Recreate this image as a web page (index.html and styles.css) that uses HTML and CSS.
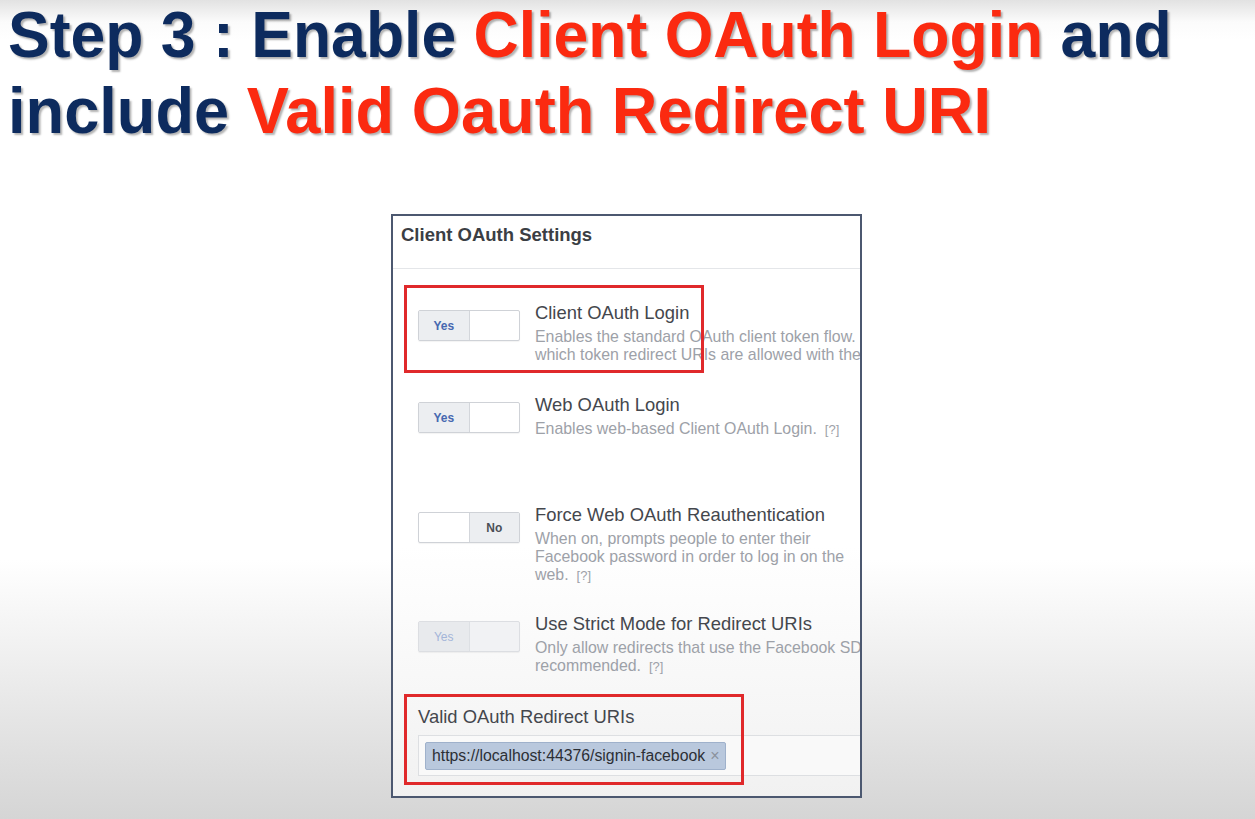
FILE: index.html
```html
<!DOCTYPE html>
<html lang="en">
<head>
<meta charset="utf-8">
<title>Step 3 : Enable Client OAuth Login</title>
<link rel="stylesheet" href="styles.css">
</head>
<body>
<h1 class="title">
  <span class="line"><span class="navy">Step 3 : Enable </span><span class="red">Client OAuth Login</span><span class="navy"> and</span></span>
  <span class="line line-2"><span class="navy">include </span><span class="red">Valid Oauth Redirect URI</span></span>
</h1>

<div class="panel">
  <div class="panel-head">Client OAuth Settings</div>
  <div class="panel-body">
    <div class="row">
      <div class="toggle"><span class="seg on yes">Yes</span><span class="seg"></span></div>
      <div class="text">
        <div class="label">Client OAuth Login</div>
        <div class="desc">Enables the standard OAuth client token flow.<br>which token redirect URIs are allowed with the</div>
      </div>
    </div>
    <div class="row row-tall">
      <div class="toggle"><span class="seg on yes">Yes</span><span class="seg"></span></div>
      <div class="text">
        <div class="label">Web OAuth Login</div>
        <div class="desc">Enables web-based Client OAuth Login.<span class="q">[?]</span></div>
      </div>
    </div>
    <div class="row row-dense">
      <div class="toggle"><span class="seg"></span><span class="seg on no">No</span></div>
      <div class="text">
        <div class="label">Force Web OAuth Reauthentication</div>
        <div class="desc">When on, prompts people to enter their<br>Facebook password in order to log in on the<br>web.<span class="q">[?]</span></div>
      </div>
    </div>
    <div class="row">
      <div class="toggle disabled"><span class="seg on yes">Yes</span><span class="seg"></span></div>
      <div class="text">
        <div class="label">Use Strict Mode for Redirect URIs</div>
        <div class="desc">Only allow redirects that use the Facebook SD<br>recommended.<span class="q">[?]</span></div>
      </div>
    </div>
    <div class="field">
      <div class="label">Valid OAuth Redirect URIs</div>
      <div class="input">
        <span class="chip">https://localhost:44376/signin-facebook<span class="chip-x">×</span></span>
      </div>
    </div>
  </div>
  <div class="mark mark-login"></div>
  <div class="mark mark-uri"></div>
</div>
</body>
</html>
```

FILE: styles.css
```css
html, body {
  margin: 0;
  padding: 0;
}
body {
  width: 1255px;
  height: 819px;
  overflow: hidden;
  font-family: "Liberation Sans", Arial, sans-serif;
  background: linear-gradient(to bottom, #e2e2e2 0px, #fbfbfb 22px, #ffffff 40px, #ffffff 560px, #d5d5d5 819px);
}

.title {
  margin: -3px 0 0 0;
  padding-left: 8px;
  font-family: "Liberation Sans", Arial, sans-serif;
  font-weight: bold;
  font-size: 65px;
  line-height: 76px;
  text-shadow: 2px 2px 2px rgba(0, 0, 0, 0.3);
  white-space: nowrap;
}
.title .line {
  display: block;
  transform: scaleX(0.962);
  transform-origin: 0 0;
}
.title .line-2 {
  transform: scaleX(0.972);
}
.navy { color: #0d2b5e; }
.red { color: #fb2a10; }

.panel {
  position: relative;
  box-sizing: border-box;
  width: 471px;
  height: 584px;
  margin: 65px 0 0 391px;
  border: 2px solid #4c5870;
  background: linear-gradient(to bottom, #ffffff 0px, #ffffff 330px, #f1f1f1 584px);
  overflow: hidden;
}

.panel-head {
  box-sizing: border-box;
  height: 53px;
  padding: 8px 0 0 8px;
  border-bottom: 1px solid #e4e6e9;
  font-size: 18.5px;
  line-height: 22px;
  font-weight: bold;
  color: #3b3e44;
  white-space: nowrap;
}

.panel-body {
  padding: 33px 0 0 25px;
}

.row {
  display: flex;
  align-items: flex-start;
  gap: 15px;
  min-height: 62px;
  margin-bottom: 30px;
}
.row-tall {
  min-height: 80px;
}
.row-dense {
  margin-bottom: 28px;
}

.toggle {
  flex: none;
  display: flex;
  box-sizing: border-box;
  width: 102px;
  height: 31px;
  margin-top: 8px;
  border: 1px solid #cfd2d7;
  border-radius: 2px;
  background: #ffffff;
  box-shadow: 0 1px 1px rgba(0, 0, 0, 0.05);
}
.seg {
  flex: 1;
  display: flex;
  align-items: center;
  justify-content: center;
  font-size: 12px;
  font-weight: bold;
}
.seg.on {
  background: #eceef1;
}
.seg.on.yes {
  border-right: 1px solid #d3d6db;
  color: #4668b0;
}
.seg.on.no {
  border-left: 1px solid #d3d6db;
  color: #4b4f56;
}
.toggle.disabled {
  border-color: #dcdee2;
  background: #f1f2f4;
}
.toggle.disabled .seg.on {
  background: #e8eaed;
  color: #a3b5d9;
  font-weight: normal;
  border-right-color: #dde0e4;
}

.text {
  white-space: nowrap;
}
.label {
  font-size: 18.4px;
  line-height: 22px;
  color: #44474d;
  white-space: nowrap;
}
.desc {
  margin-top: 4px;
  font-size: 15.9px;
  line-height: 18px;
  color: #9da1a8;
}
.q {
  margin-left: 8px;
  font-size: 13px;
}

.input {
  box-sizing: border-box;
  width: 460px;
  height: 41px;
  margin-top: 7px;
  padding: 6px 0 0 6px;
  border: 1px solid #dddfe2;
  background: #f9f9f9;
}
.chip {
  display: inline-flex;
  align-items: center;
  box-sizing: border-box;
  height: 28px;
  padding: 0 6px;
  border: 1px solid #9fb1cb;
  border-radius: 2px;
  background: #b9c8dd;
  font-size: 15.8px;
  color: #2c2f35;
  white-space: nowrap;
}
.chip-x {
  margin-left: 5px;
  color: #8b929c;
  font-size: 16px;
}

.mark {
  position: absolute;
  box-sizing: border-box;
  border: 3px solid #e0292b;
}
.mark-login {
  left: 11px;
  top: 69px;
  width: 300px;
  height: 88px;
}
.mark-uri {
  left: 11px;
  top: 478px;
  width: 340px;
  height: 91px;
}
```
